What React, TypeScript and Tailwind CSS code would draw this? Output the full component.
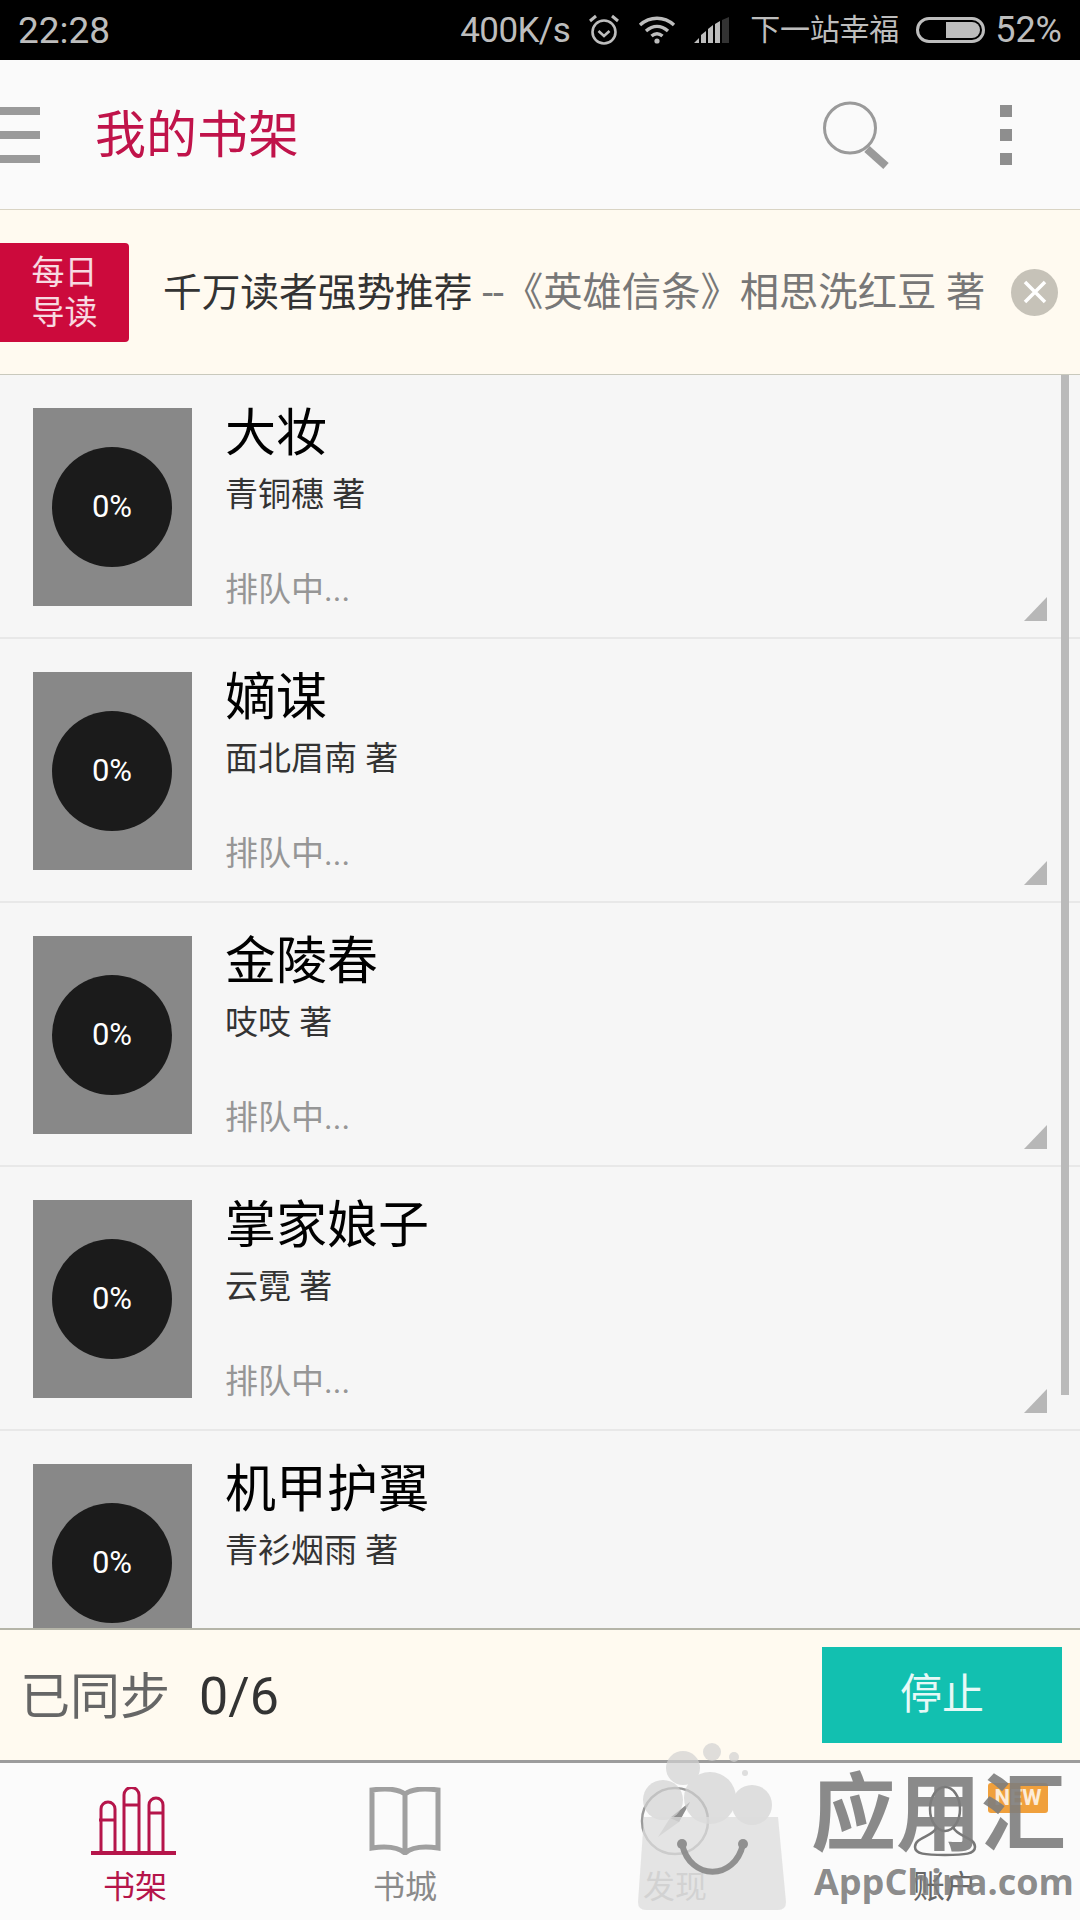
const FONT = { cjk: "font-['Roboto','Noto_Sans_CJK_SC',sans-serif]" };

const books = [
  { title: '大妆', author: '青铜穗 著' },
  { title: '嫡谋', author: '面北眉南 著' },
  { title: '金陵春', author: '吱吱 著' },
  { title: '掌家娘子', author: '云霓 著' },
  { title: '机甲护翼', author: '青衫烟雨 著' },
];

function StatusBar() {
  return (
    <div className="h-[60px] shrink-0 bg-black text-[#bdbdbd] flex items-center pl-[18px] pr-[18px] text-[36px] leading-none">
      <span className="text-[37px]">22:28</span>
      <span className="ml-auto text-[35px] tracking-[-0.6px]">400K/s</span>
      {/* alarm */}
      <svg className="ml-[18px]" width="32" height="32" viewBox="0 0 32 32" fill="none" stroke="#bdbdbd" strokeWidth="2.6">
        <circle cx="16" cy="18" r="11.5" />
        <path d="M10.5 17l5.5 5 5.5-5" />
        <path d="M2 7l6-5M30 7l-6-5" strokeWidth="3" />
      </svg>
      {/* wifi */}
      <svg className="ml-[18px]" width="38" height="28" viewBox="0 0 38 28" fill="none" stroke="#bdbdbd" strokeWidth="3.4">
        <path d="M2 9c10-9 24-9 34 0" />
        <path d="M8 15c7-6 15-6 22 0" />
        <path d="M13.5 20c3.500-3 7.500-3 11 0" />
        <circle cx="19" cy="25" r="2.600" fill="#bdbdbd" stroke="none" />
      </svg>
      {/* signal */}
      <svg className="ml-[18px]" width="37" height="26" viewBox="0 0 37 26" fill="#bdbdbd">
        <path d="M0 26l5-5v5zM7 26v-8l5-4v12zM14 26V12l5-4v18zM21 26V7l5-3v22z" />
        <path d="M28 26V3l7-3v26z" fill="#333333" />
      </svg>
      <span className="ml-[19px] text-[30px] tracking-[-0.2px]">下一站幸福</span>
      {/* battery */}
      <div className="ml-[17px] w-[69px] h-[26px] rounded-full border-[3px] border-[#bdbdbd] flex justify-end p-[2px]">
        <div className="w-[34px] h-full bg-[#bdbdbd] rounded-r-full" />
      </div>
      <span className="ml-[10px]">52%</span>
    </div>
  );
}

function Header() {
  return (
    <div className="h-[150px] shrink-0 bg-[#fafafa] border-b border-[#d9d4c4] flex items-center relative">
      <div className="w-[40px] flex flex-col gap-[16px]">
        <div className="h-[8px] bg-[#9a9a9a]" />
        <div className="h-[8px] bg-[#9a9a9a]" />
        <div className="h-[8px] bg-[#9a9a9a]" />
      </div>
      <h1 className="ml-[55px] text-[51px] leading-[50px] text-[#c0134a] mb-[-2px]">我的书架</h1>
      <svg className="ml-auto" width="68" height="68" viewBox="0 0 68 68" fill="none" stroke="#9a9a9a">
        <ellipse cx="27" cy="27" rx="25.500" ry="25" strokeWidth="3" />
        <path d="M44 48l19 17" strokeWidth="8" />
      </svg>
      <div className="ml-[109px] mr-[68px] flex flex-col gap-[12px]">
        <div className="w-[12px] h-[12px] bg-[#8e8e8e]" />
        <div className="w-[12px] h-[12px] bg-[#8e8e8e]" />
        <div className="w-[12px] h-[12px] bg-[#8e8e8e]" />
      </div>
    </div>
  );
}

function Banner() {
  return (
    <div className="h-[165px] shrink-0 bg-[#fffaf0] border-b border-[#c9c9bd] flex items-center">
      <div className="w-[129px] h-[99px] bg-[#cc0a3c] rounded-r-[4px] flex flex-col items-center justify-center text-white/85 text-[33px] leading-[40px] pt-[2px]">
        <span>每日</span>
        <span>导读</span>
      </div>
      <p className="ml-[34px] mt-[4px] text-[38.700px] leading-none whitespace-nowrap text-[#333]">
        千万读者强势推荐<span className="text-[#777] text-[39.300px]"> --《英雄信条》相思洗红豆 著</span>
      </p>
      <div className="ml-auto mr-[22px] w-[47px] h-[47px] rounded-full bg-[#c6c2b8] flex items-center justify-center">
        <svg width="26" height="26" viewBox="0 0 26 26" stroke="#ffffff" strokeWidth="3.500">
          <path d="M3 3l20 20M23 3L3 23" />
        </svg>
      </div>
    </div>
  );
}

function BookRow({ title, author }: { title: string; author: string }) {
  return (
    <div className="h-[264px] relative">
      <div className="flex pt-[33px] pl-[33px]">
        <div className="w-[159px] h-[198px] bg-[#888888] flex items-center justify-center pr-[2px]">
          <div className="w-[120px] h-[120px] rounded-full bg-[#1b1b1b] flex items-center justify-center text-white text-[31px] pl-[1px]">
            0%
          </div>
        </div>
        <div className="ml-[33px] h-[198px] flex flex-col">
          <div className="text-[51px] leading-[52px] text-black">{title}</div>
          <div className="mt-[18px] text-[33px] leading-[33px] text-[#333]">{author}</div>
          <div className="mt-auto text-[33px] leading-[33px] text-[#969696]">排队中...</div>
        </div>
      </div>
      <svg className="absolute left-[1024px] top-[222px]" width="23" height="24" viewBox="0 0 23 24" fill="#b7b7b7">
        <path d="M0 24L23 0v24z" />
      </svg>
      <div className="absolute left-0 right-0 top-[262px] h-[2px] bg-[#e8e8e8]" />
    </div>
  );
}

function SyncBar() {
  return (
    <div className="h-[135px] shrink-0 bg-[#fffaf0] border-t-[2px] border-t-[#b5b5a8] border-b-[3px] border-b-[#9c9c9c] flex items-center pl-[20px]">
      <span className="text-[50px] leading-none text-[#666] mt-[4px]">已同步</span>
      <span className="ml-[29px] text-[52px] leading-none text-[#333] mt-[4px]">0/6</span>
      <button className="ml-auto mr-[18px] w-[240px] h-[96px] bg-[#12c0b0] text-white/90 text-[42px] leading-none">停止</button>
    </div>
  );
}

function Shelf() {
  return (
    <svg className="mr-[3px]" width="85" height="68" viewBox="0 0 85 68" fill="none" stroke="#b5154a" strokeWidth="3">
      <path d="M10 66V22a7 7 0 0 1 14 0v44M8 33h16" />
      <path d="M33 66V8a7 7 0 0 1 15 0v58M33 18h15" />
      <path d="M58 66V18a7 7 0 0 1 14 0v48M58 26h14" />
      <path d="M0 66h85" strokeWidth="4" />
    </svg>
  );
}

function BookIcon() {
  return (
    <svg width="72" height="68" viewBox="0 0 72 68" fill="none" stroke="#a0a0a0" strokeWidth="5">
      <path d="M3 3c14-2 26-1 33 4 7-5 19-6 33-4v58c-14-2-26-1-33 5-7-6-19-7-33-5zM36 7v59" />
    </svg>
  );
}

function Compass() {
  return (
    <svg width="70" height="72" viewBox="0 0 70 72" fill="none" stroke="#9a9a9a" strokeWidth="2.500">
      <circle cx="35" cy="36" r="33" />
      <path d="M50 17L30 33 18 52l21-15z" fill="#c4c4c4" stroke="none" />
      <path d="M50 17L30 33l9 4z" fill="#8f8f8f" stroke="none" />
    </svg>
  );
}

function Person() {
  return (
    <svg width="64" height="72" viewBox="0 0 64 72" fill="none" stroke="#777" strokeWidth="2.500">
      <ellipse cx="32" cy="24" rx="15" ry="22" />
      <path d="M24 42c-4 10-22 10-22 20 0 7 10 8 30 8s30-1 30-8c0-10-18-10-22-20" />
    </svg>
  );
}

function TabItem({ icon, label, color }: { icon: React.ReactNode; label: string; color: string }) {
  return (
    <div className="flex flex-col items-center">
      <div className="h-[72px] flex items-center">{icon}</div>
      <span className={`mt-[14px] text-[32px] leading-[32px] ${color}`}>{label}</span>
    </div>
  );
}

function TabBar() {
  return (
    <div className="flex-1 bg-[#fbfbfb] grid grid-cols-4 pt-[22px] relative">
      <TabItem icon={<Shelf />} label="书架" color="text-[#b5154a]" />
      <TabItem icon={<BookIcon />} label="书城" color="text-[#8a8a8a]" />
      <TabItem icon={<Compass />} label="发现" color="text-[#b5b5b5]" />
      <TabItem icon={<Person />} label="账户" color="text-[#666]" />
      <div className="absolute left-[988px] top-[20px] w-[60px] h-[30px] bg-[#ee8a0c]/80 rounded-[3px] text-white/80 text-[22px] leading-[30px] text-center font-bold">
        NEW
      </div>
    </div>
  );
}

// appchina watermark sits on top of the tab bar
function Watermark() {
  return (
    <div className="absolute left-[630px] top-[1740px] w-[450px] h-[175px] pointer-events-none">
      <svg className="absolute left-0 top-0" width="170" height="175" viewBox="0 0 170 175">
        <g fill="#d2d2d2" opacity="0.7">
          <circle cx="82" cy="12" r="9" />
          <circle cx="104" cy="17" r="5" />
          <circle cx="115" cy="33" r="3" />
          <circle cx="53" cy="28" r="17" />
          <circle cx="33" cy="60" r="20" />
          <circle cx="80" cy="58" r="26" />
          <circle cx="122" cy="65" r="20" />
        </g>
        <path d="M14 77h134l8 85q0 8-8 8H16q-8 0-8-8z" fill="#dcdcdc" opacity="0.75" />
        <g opacity="0.9">
          <path d="M52 104c8 37 53 37 61 0" fill="none" stroke="#888" strokeWidth="6" strokeLinecap="round" />
          <circle cx="52" cy="104" r="5" fill="#888" />
          <circle cx="113" cy="104" r="5" fill="#888" />
        </g>
      </svg>
      <div className="absolute left-[181px] top-[32px] text-[85px] leading-[86px] font-bold text-[#7d7d7d]/90 whitespace-nowrap">应用汇</div>
      <div className="absolute left-[184px] top-[120px] font-['Open_Sans',sans-serif] text-[36px] leading-[44px] font-bold text-[#7d7d7d]/90 whitespace-nowrap">AppChina.com</div>
    </div>
  );
}

export default function App() {
  return (
    <div className={`w-[1080px] h-[1920px] relative overflow-hidden flex flex-col bg-[#f6f6f6] ${FONT.cjk}`}>
      <StatusBar />
      <Header />
      <Banner />
      <div className="h-[1253px] shrink-0 overflow-hidden relative">
        {books.map((book) => (
          <BookRow key={book.title} title={book.title} author={book.author} />
        ))}
        <div className="absolute left-[1061px] top-0 w-[8px] h-[1020px] bg-[#bababa]" />
      </div>
      <SyncBar />
      <TabBar />
      <Watermark />
    </div>
  );
}
